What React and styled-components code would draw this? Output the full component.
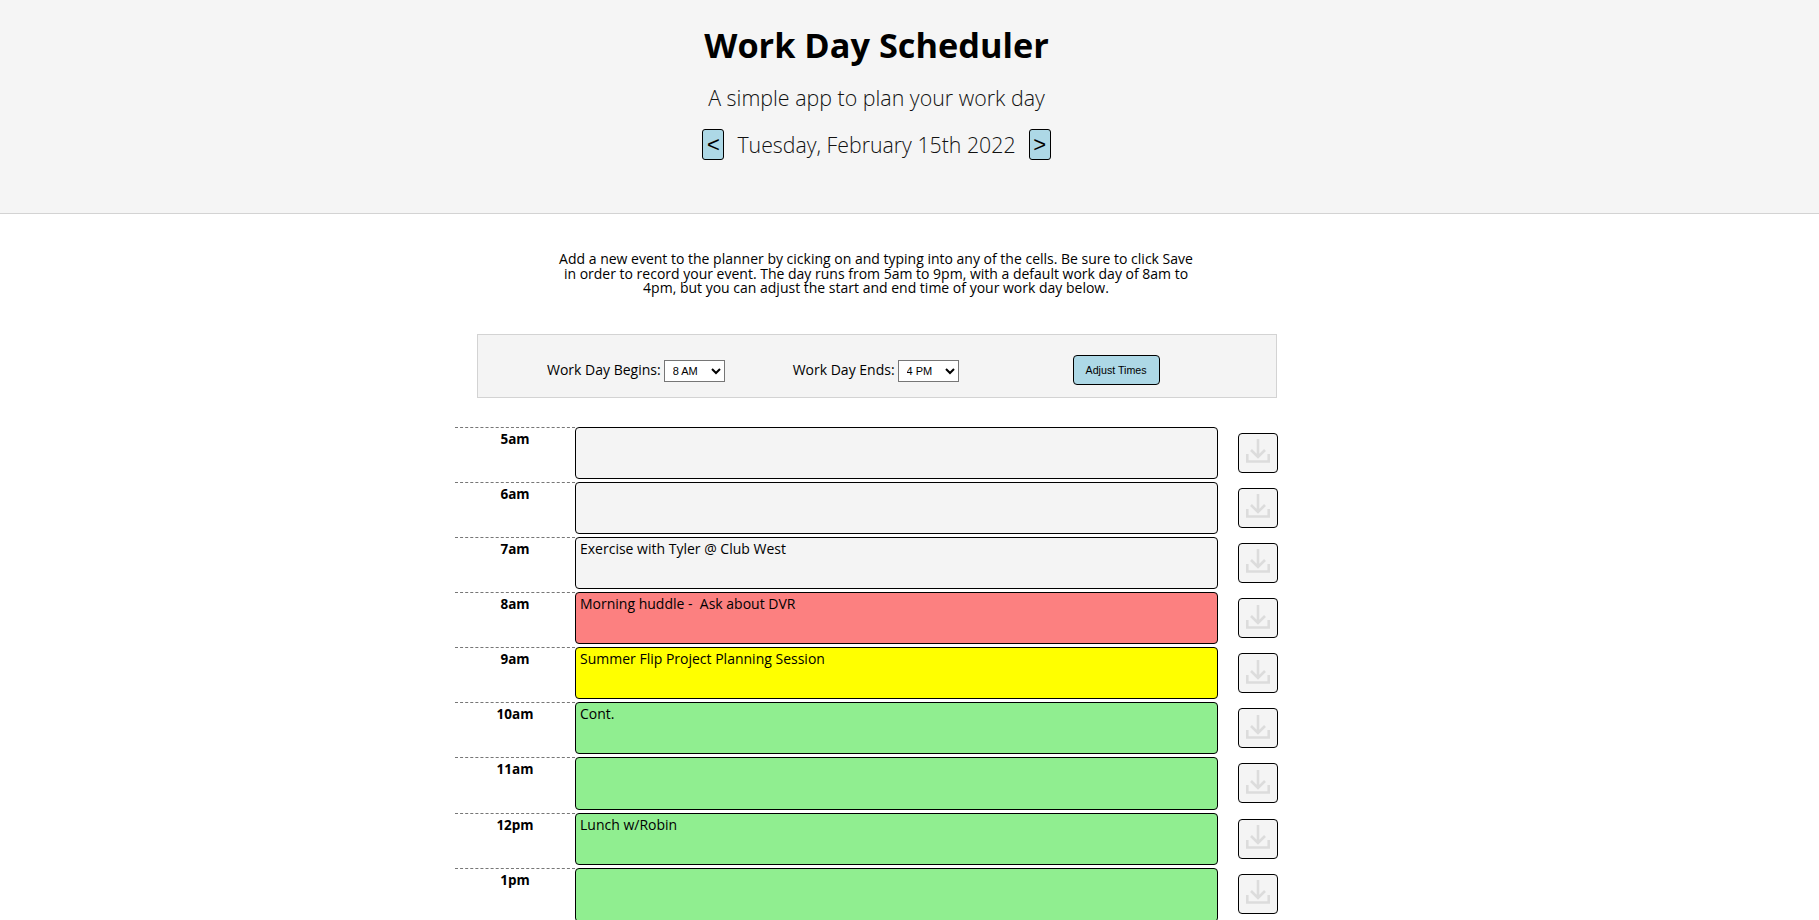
import React from 'react'
import styled, { createGlobalStyle } from 'styled-components'

const GlobalStyle = createGlobalStyle`
  html, body { margin: 0; padding: 0; background: #fff; }
  body { font-family: "Open Sans", "Noto Sans", sans-serif; color: #000; height: 920px; overflow: hidden; }
`

const Header = styled.header`
  height: 213px;
  background: #f5f5f5;
  border-bottom: 1px solid #d3d3d3;
  display: flex;
  flex-direction: column;
  align-items: center;
  padding-right: 66px;
  box-sizing: content-box;
`
const Title = styled.h1`
  margin: 24px 0 0;
  font-size: 34.3px;
  line-height: 42px;
  font-weight: 700;
`
const Lead = styled.p`
  margin: 17px 0 0;
  font-size: 21.4px;
  line-height: 30px;
  font-weight: 300;
  color: #111;
`
const DateRow = styled.div`
  margin-top: 16px;
  display: flex;
  align-items: center;
  gap: 13px;
`
const DateText = styled.span`
  font-size: 21.3px;
  line-height: 29px;
  font-weight: 300;
  color: #111;
`
const NavButton = styled.button`
  width: 22px;
  height: 31px;
  padding: 0;
  background: #add8e6;
  border: 1px solid #000;
  border-radius: 3px;
  font-family: "Liberation Sans", sans-serif;
  font-size: 22px;
  color: #000;
`
const Main = styled.main`
  width: 823px;
  margin-left: 455px;
`
const Intro = styled.p`
  width: 640px;
  margin: 38px 0 0 101px;
  font-size: 14px;
  line-height: 14.5px;
  text-align: center;
`
const Controls = styled.div`
  margin: 38px 0 0 22px;
  width: 800px;
  height: 64px;
  box-sizing: border-box;
  background: #f4f4f4;
  border: 1px solid #d3d3d3;
  display: flex;
  align-items: center;
  padding: 7px 0 0 69px;
`
const TimeLabel = styled.label`
  font-size: 14px;
  display: flex;
  align-items: center;
  gap: 3px;
  margin-right: ${p => p.$gap}px;
`
const TimeSelect = styled.select`
  width: 61px;
  height: 22px;
  margin-top: 3px;
  font-family: "Liberation Sans", sans-serif;
  font-size: 11px;
  background: #fff;
  border: 1px solid #767676;
  border-radius: 0;
  padding-left: 4px;
`
const AdjustButton = styled.button`
  width: 87px;
  height: 30px;
  margin-top: 2px;
  padding: 0;
  background: #add8e6;
  border: 1px solid #000;
  border-radius: 4px;
  font-family: "Liberation Sans", sans-serif;
  font-size: 10.67px;
  color: #000;
`
const Planner = styled.div`
  margin-top: 29.2px;
`
const Row = styled.div`
  display: grid;
  grid-template-columns: 120px 643px 60px;
  height: 55.14px;
`
const Hour = styled.div`
  border-top: 1px dashed #777;
  font-size: 13.5px;
  font-weight: 700;
  text-align: center;
  padding-top: 2px;
  line-height: 18px;
`
const EventBox = styled.textarea`
  box-sizing: border-box;
  height: 52.1px;
  width: 643px;
  margin: 0;
  padding: 1px 4px;
  resize: none;
  background: ${p => p.$bg};
  border: 1px solid #000;
  border-radius: 4px;
  font-family: inherit;
  font-size: 14px;
  line-height: 19px;
  color: #000;

  ${Row}:last-child & {
    height: 54px;
  }
`
const SaveButton = styled.button`
  justify-self: end;
  align-self: start;
  margin-top: 6px;
  width: 40px;
  height: 40px;
  padding: 0 0 3px;
  display: flex;
  align-items: center;
  justify-content: center;
  background: #f4f4f4;
  border: 1px solid #000;
  border-radius: 4px;
`

const DownloadIcon = () => (
  <svg width="24" height="24" viewBox="0 0 24 24" fill="none" stroke="#dcdcdc" strokeWidth="2.6">
    <path d="M12 0v17M5 11l7 7 7-7M1.300 15v7.500h21.400V15" />
  </svg>
)

const hours = [
  ['5am', '', '#f4f4f4'],
  ['6am', '', '#f4f4f4'],
  ['7am', 'Exercise with Tyler @ Club West', '#f4f4f4'],
  ['8am', 'Morning huddle -  Ask about DVR', '#fc8080'],
  ['9am', 'Summer Flip Project Planning Session', '#ffff00'],
  ['10am', 'Cont.', '#90ee90'],
  ['11am', '', '#90ee90'],
  ['12pm', 'Lunch w/Robin', '#90ee90'],
  ['1pm', '', '#90ee90'],
]

const App = () => (
  <>
    <GlobalStyle />
    <Header>
      <Title>Work Day Scheduler</Title>
      <Lead>A simple app to plan your work day</Lead>
      <DateRow>
        <NavButton>&lt;</NavButton>
        <DateText>Tuesday, February 15th 2022</DateText>
        <NavButton>&gt;</NavButton>
      </DateRow>
    </Header>
    <Main>
      <Intro>
        Add a new event to the planner by cicking on and typing into any of the cells. Be sure to click Save
        in order to record your event. The day runs from 5am to 9pm, with a default work day of 8am to
        4pm, but you can adjust the start and end time of your work day below.
      </Intro>
      <Controls>
        <TimeLabel $gap={68}>
          Work Day Begins:
          <TimeSelect defaultValue="8 AM"><option>8 AM</option></TimeSelect>
        </TimeLabel>
        <TimeLabel $gap={114}>
          Work Day Ends:
          <TimeSelect defaultValue="4 PM"><option>4 PM</option></TimeSelect>
        </TimeLabel>
        <AdjustButton>Adjust Times</AdjustButton>
      </Controls>
      <Planner>
        {hours.map(([hour, text, bg]) => (
          <Row key={hour}>
            <Hour>{hour}</Hour>
            <EventBox $bg={bg} defaultValue={text} />
            <SaveButton aria-label={`Save ${hour}`}><DownloadIcon /></SaveButton>
          </Row>
        ))}
      </Planner>
    </Main>
  </>
)

export default App
